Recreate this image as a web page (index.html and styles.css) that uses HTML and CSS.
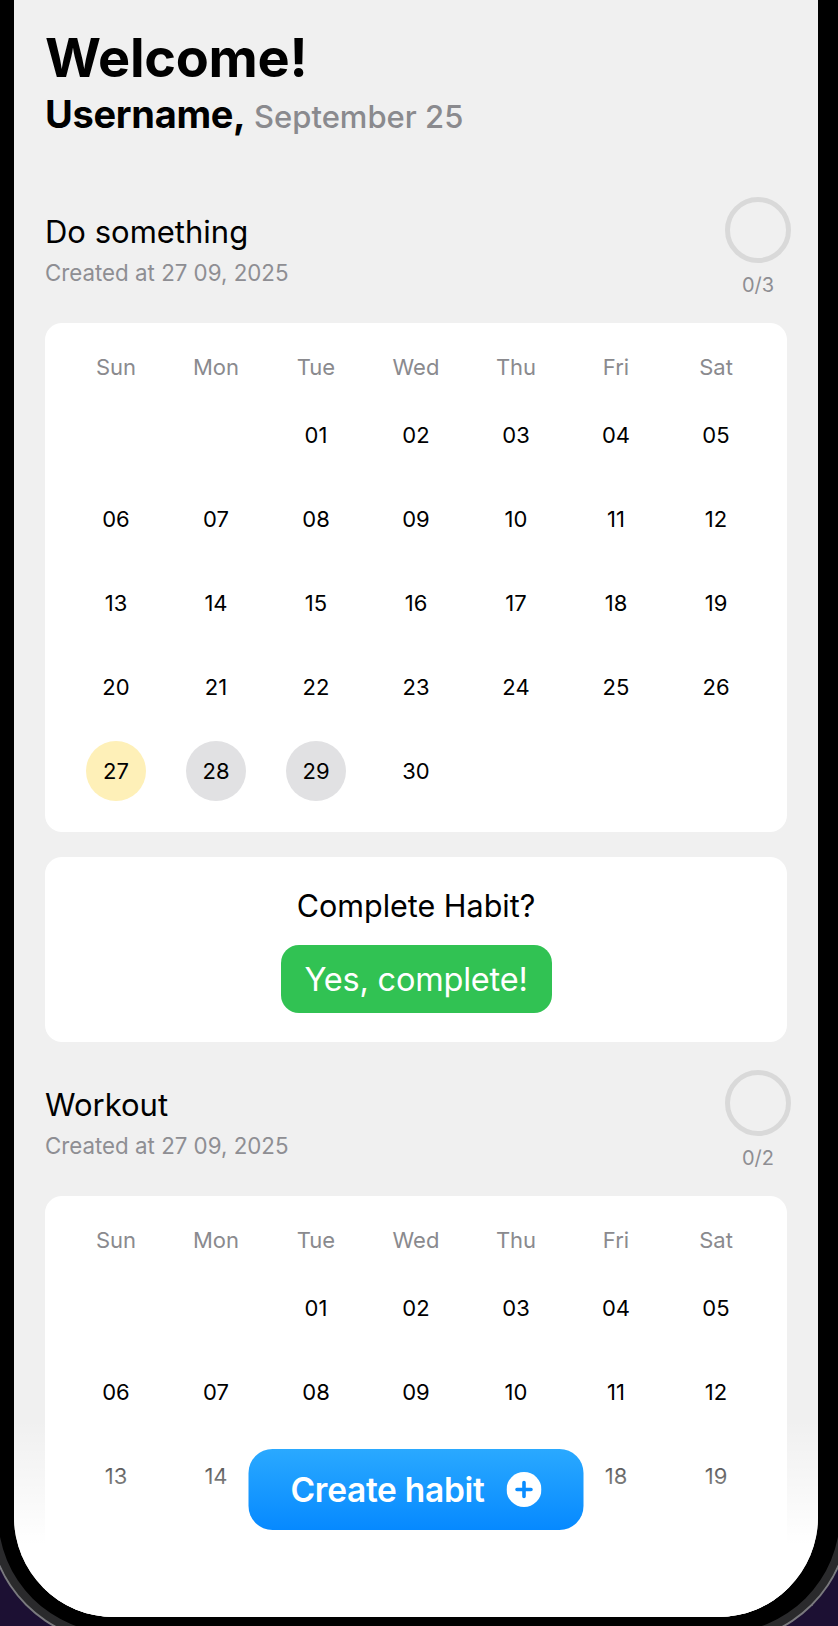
FILE: index.html
```html
<!DOCTYPE html>
<html lang="en">
<head>
<meta charset="utf-8">
<title>Habits</title>
<link rel="stylesheet" href="styles.css">
</head>
<body>
<div class="phone">
  <main class="screen">
    <header class="greeting">
      <h1 class="title">Welcome!</h1>
      <p class="subtitle"><span class="user">Username,</span> <span class="date">September 25</span></p>
    </header>

    <section class="habit">
      <div class="habit-head">
        <div class="habit-info">
          <h2 class="habit-name">Do something</h2>
          <p class="habit-created">Created at 27 09, 2025</p>
        </div>
        <div class="habit-progress">
          <svg class="ring" width="66" height="66" viewBox="0 0 66 66"><circle cx="33" cy="33" r="30.5" fill="none" stroke="#d9d9d9" stroke-width="5"/></svg>
          <span class="count">0/3</span>
        </div>
      </div>
      <div class="card calendar">
        <div class="dow">Sun</div><div class="dow">Mon</div><div class="dow">Tue</div><div class="dow">Wed</div><div class="dow">Thu</div><div class="dow">Fri</div><div class="dow">Sat</div>
        <div class="day"></div><div class="day"></div><div class="day">01</div><div class="day">02</div><div class="day">03</div><div class="day">04</div><div class="day">05</div>
        <div class="day">06</div><div class="day">07</div><div class="day">08</div><div class="day">09</div><div class="day">10</div><div class="day">11</div><div class="day">12</div>
        <div class="day">13</div><div class="day">14</div><div class="day">15</div><div class="day">16</div><div class="day">17</div><div class="day">18</div><div class="day">19</div>
        <div class="day">20</div><div class="day">21</div><div class="day">22</div><div class="day">23</div><div class="day">24</div><div class="day">25</div><div class="day">26</div>
        <div class="day"><span class="mark today">27</span></div><div class="day"><span class="mark future">28</span></div><div class="day"><span class="mark future">29</span></div><div class="day">30</div><div class="day"></div><div class="day"></div><div class="day"></div>
      </div>
      <div class="card confirm">
        <p class="confirm-title">Complete Habit?</p>
        <button class="yes">Yes, complete!</button>
      </div>
    </section>

    <section class="habit">
      <div class="habit-head">
        <div class="habit-info">
          <h2 class="habit-name">Workout</h2>
          <p class="habit-created">Created at 27 09, 2025</p>
        </div>
        <div class="habit-progress">
          <svg class="ring" width="66" height="66" viewBox="0 0 66 66"><circle cx="33" cy="33" r="30.5" fill="none" stroke="#d9d9d9" stroke-width="5"/></svg>
          <span class="count">0/2</span>
        </div>
      </div>
      <div class="card calendar">
        <div class="dow">Sun</div><div class="dow">Mon</div><div class="dow">Tue</div><div class="dow">Wed</div><div class="dow">Thu</div><div class="dow">Fri</div><div class="dow">Sat</div>
        <div class="day"></div><div class="day"></div><div class="day">01</div><div class="day">02</div><div class="day">03</div><div class="day">04</div><div class="day">05</div>
        <div class="day">06</div><div class="day">07</div><div class="day">08</div><div class="day">09</div><div class="day">10</div><div class="day">11</div><div class="day">12</div>
        <div class="day">13</div><div class="day">14</div><div class="day">15</div><div class="day">16</div><div class="day">17</div><div class="day">18</div><div class="day">19</div>
        <div class="day">20</div><div class="day">21</div><div class="day">22</div><div class="day">23</div><div class="day">24</div><div class="day">25</div><div class="day">26</div>
        <div class="day">27</div><div class="day">28</div><div class="day">29</div><div class="day">30</div><div class="day"></div><div class="day"></div><div class="day"></div>
      </div>
    </section>

    <div class="fade"></div>
    <button class="create">
      <span>Create habit</span>
      <svg class="plus" width="35" height="35" viewBox="0 0 35 35"><circle cx="17.5" cy="17.5" r="17.5" fill="#fff"/><path d="M17.5 10.5v14M10.5 17.5h14" stroke="#0a8cff" stroke-width="3.6" stroke-linecap="round"/></svg>
    </button>
  </main>
</div>
</body>
</html>
```

FILE: styles.css
```css
* { box-sizing: border-box; }

html, body {
  margin: 0;
  padding: 0;
}

body {
  width: 838px;
  height: 1626px;
  overflow: hidden;
  background: #1c1033;
  font-family: "Inter", "Noto Sans", sans-serif;
  color: #000;
}

.phone {
  margin: -20px -12px 0 -12px;
  width: 862px;
  height: 1663px;
  padding: 20px 30px 24px 24px;
  background: #000;
  border: 2px solid #7a7a7e;
  border-top: 0;
  border-radius: 0 0 128px 128px;
  box-shadow: inset 0 0 0 8px #2a2a2c;
}

.phone .screen {
  position: relative;
  height: 100%;
  overflow: hidden;
  background: #f0f0f0;
  border-radius: 0 0 100px 100px;
  padding: 28px 31px 0;
}

.title {
  margin: 0;
  font-size: 54px;
  line-height: 60px;
  font-weight: 700;
  letter-spacing: -0.3px;
}

.subtitle {
  margin: 4px 0 0;
  line-height: 44px;
}

.user {
  font-size: 38px;
  font-weight: 700;
  letter-spacing: -0.3px;
  margin-right: 4px;
}

.date {
  font-size: 31px;
  font-weight: 500;
  color: #8a8a8e;
}

.habit-head {
  display: flex;
  justify-content: space-between;
  align-items: flex-start;
  margin-top: 53px;
}

.habit + .habit .habit-head {
  margin-top: 28px;
}

.habit-info {
  padding-top: 17px;
}

.habit-name {
  margin: 0;
  font-size: 31px;
  line-height: 36px;
  font-weight: 400;
}

.habit-created {
  margin: 9px 0 0;
  font-size: 22.3px;
  line-height: 28px;
  color: #8e8e93;
}

.habit-progress {
  display: flex;
  flex-direction: column;
  align-items: center;
  margin-right: -4px;
}

.ring {
  display: block;
}

.count {
  margin-top: 10px;
  font-size: 20px;
  line-height: 24px;
  color: #8e8e93;
}

.card {
  background: #fff;
  border-radius: 17px;
}

.calendar {
  margin-top: 26px;
  padding: 21px 21px 19px;
  display: grid;
  grid-template-columns: repeat(7, 1fr);
  grid-template-rows: 49px;
  grid-auto-rows: 84px;
}

.dow {
  align-self: start;
  height: 46px;
  line-height: 46px;
  text-align: center;
  font-size: 22px;
  color: #8a8a8e;
}

.day {
  display: flex;
  align-items: center;
  justify-content: center;
  font-size: 22px;
  color: #000;
}

.mark {
  width: 60px;
  height: 60px;
  border-radius: 50%;
  display: flex;
  align-items: center;
  justify-content: center;
}

.mark.today { background: #fef0b8; }
.mark.future { background: #e1e1e3; }

.confirm {
  margin-top: 25px;
  padding: 31px 0 29px;
  display: flex;
  flex-direction: column;
  align-items: center;
}

.confirm-title {
  margin: 0;
  font-size: 30.5px;
  line-height: 36px;
}

.yes {
  margin-top: 21px;
  width: 271px;
  height: 68px;
  border: 0;
  border-radius: 18px;
  background: #31c253;
  color: #fff;
  font-family: inherit;
  font-size: 32.5px;
  font-weight: 400;
  letter-spacing: -0.2px;
}

.fade {
  position: absolute;
  left: 0;
  right: 0;
  bottom: 0;
  height: 197px;
  background: linear-gradient(to bottom, rgba(255,255,255,0) 0%, rgba(255,255,255,0.6) 40%, #fff 63%, #fff 100%);
  pointer-events: none;
}

.create {
  position: absolute;
  left: 50%;
  bottom: 87px;
  transform: translateX(-50%);
  width: 335px;
  height: 81px;
  border: 0;
  border-radius: 24px;
  background: linear-gradient(to bottom, #2aa9ff, #0689ff);
  color: #fff;
  font-family: inherit;
  font-size: 33.5px;
  font-weight: 600;
  letter-spacing: -0.3px;
  display: flex;
  align-items: center;
  justify-content: center;
  gap: 22px;
  padding: 0;
}

.plus {
  display: block;
  flex: none;
}
```
